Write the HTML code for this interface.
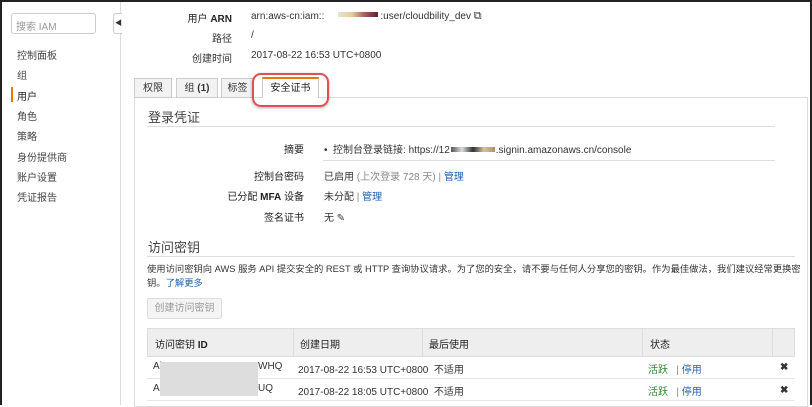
<!DOCTYPE html>
<html><head><meta charset="utf-8"><style>
*{box-sizing:border-box;margin:0;padding:0}
body{width:812px;height:405px;overflow:hidden;background:#fff;font-family:"Liberation Sans","Noto Sans CJK SC",sans-serif;font-size:10px;color:#333;position:relative}
.a{position:absolute;white-space:nowrap}
.frame{position:absolute;left:0;top:0;width:812px;height:405px;border:2px solid #222;border-bottom:none;pointer-events:none}
.nav{left:17px;font-size:10px;color:#444}
.lbl{text-align:right;width:120px}
.blue{color:#1f5fad}
.gray{color:#888}
</style></head><body>
<div class="a" style="left:120px;top:0;width:1px;height:405px;background:#ddd"></div>
<div class="a" style="left:11px;top:13px;width:85px;height:21px;border:1px solid #ccc;border-radius:3px;padding:4px 4px;color:#999;font-size:10px">搜索 IAM</div>
<div class="a" style="left:113px;top:13px;width:9px;height:21px;border:1px solid #ccc;border-right:none;background:#fff;border-radius:3px 0 0 3px;font-size:7px;line-height:19px;padding-left:1px">◀</div>
<div class="a nav" style="top:47px">控制面板</div>
<div class="a nav" style="top:67px">组</div>
<div class="a" style="left:11px;top:87px;width:2px;height:15px;background:#e47911"></div>
<div class="a nav" style="top:88px;color:#222">用户</div>
<div class="a nav" style="top:108px">角色</div>
<div class="a nav" style="top:128px">策略</div>
<div class="a nav" style="top:149px">身份提供商</div>
<div class="a nav" style="top:169px">账户设置</div>
<div class="a nav" style="top:189px">凭证报告</div>

<div class="a lbl" style="left:112px;top:10px;color:#222">用户 <b>ARN</b></div>
<div class="a lbl" style="left:112px;top:30px">路径</div>
<div class="a lbl" style="left:112px;top:50px">创建时间</div>
<div class="a" style="left:251px;top:10px">arn:aws-cn:iam::<span style="display:inline-block;width:40px;height:5px;margin:0 2px 2px 14px;background:linear-gradient(90deg,#dfe8d0,#e6cfa0,#a06060,#602030)"></span>:user/cloudbility_dev <span style="font-size:11px">⧉</span></div>
<div class="a" style="left:251px;top:30px">/</div>
<div class="a" style="left:251px;top:50px">2017-08-22 16:53 UTC+0800</div>

<div class="a" style="left:134px;top:97px;width:674px;height:310px;border:1px solid #ddd"></div>
<div class="a" style="left:134px;top:78px;width:38px;height:20px;border:1px solid #ccc;background:#f2f2f2;text-align:center;line-height:20px">权限</div>
<div class="a" style="left:176px;top:78px;width:42px;height:20px;border:1px solid #ccc;background:#f2f2f2;text-align:center;line-height:20px">组 <b>(1)</b></div>
<div class="a" style="left:221px;top:78px;width:33px;height:20px;border:1px solid #ccc;background:#f2f2f2;text-align:center;line-height:20px">标签</div>
<div class="a" style="left:262px;top:77px;width:57px;height:21px;border:1px solid #ccc;border-top:2px solid #e47911;border-bottom:none;background:#fff;text-align:center;line-height:20px;color:#222">安全证书</div>
<div class="a" style="left:252px;top:73px;width:77px;height:34px;border:2px solid #e05050;border-radius:9px;box-shadow:0 1px 3px rgba(0,0,0,.3)"></div>

<div class="a" style="left:148px;top:107px;font-size:13px;color:#444">登录凭证</div>
<div class="a" style="left:147px;top:126px;width:628px;height:1px;background:#ddd"></div>
<div class="a lbl" style="left:184px;top:141px;color:#222">摘要</div>
<div class="a" style="left:324px;top:141px">•&nbsp; 控制台登录链接: https://12<span style="display:inline-block;width:44px;height:5px;margin:0 1px 1px;background:linear-gradient(90deg,#555,#ddd,#333,#d8c0a0,#b09060)"></span>.signin.amazonaws.cn/console</div>
<div class="a" style="left:323px;top:160px;width:452px;height:1px;background:#ddd"></div>
<div class="a lbl" style="left:184px;top:168px;color:#222">控制台密码</div>
<div class="a" style="left:324px;top:168px">已启用 <span class="gray">(上次登录 728 天)</span> <span class="gray">|</span> <span class="blue">管理</span></div>
<div class="a lbl" style="left:184px;top:188px;color:#222">已分配 <b>MFA</b> 设备</div>
<div class="a" style="left:324px;top:188px">未分配 <span class="gray">|</span> <span class="blue">管理</span></div>
<div class="a lbl" style="left:184px;top:209px;color:#222">签名证书</div>
<div class="a" style="left:324px;top:209px">无 ✎</div>

<div class="a" style="left:148px;top:237px;font-size:13px;color:#444">访问密钥</div>
<div class="a" style="left:147px;top:256px;width:648px;height:1px;background:#ddd"></div>
<div class="a" style="left:147px;top:261px;font-size:9.3px">使用访问密钥向 AWS 服务 API 提交安全的 REST 或 HTTP 查询协议请求。为了您的安全，请不要与任何人分享您的密钥。作为最佳做法，我们建议经常更换密</div>
<div class="a" style="left:147px;top:275px;font-size:9.3px">钥。<span class="blue">了解更多</span></div>
<div class="a" style="left:147px;top:298px;width:75px;height:21px;border:1px solid #ddd;background:#f4f4f4;border-radius:2px;color:#999;text-align:center;line-height:19px">创建访问密钥</div>

<div class="a" style="left:147px;top:328px;width:648px;height:29px;background:#eee;border:1px solid #ddd"></div>
<div class="a" style="left:293px;top:328px;width:1px;height:29px;background:#ddd"></div>
<div class="a" style="left:422px;top:328px;width:1px;height:29px;background:#ddd"></div>
<div class="a" style="left:642px;top:328px;width:1px;height:29px;background:#ddd"></div>
<div class="a" style="left:772px;top:328px;width:1px;height:29px;background:#ddd"></div>
<div class="a" style="left:155px;top:336px;color:#222">访问密钥 <b>ID</b></div>
<div class="a" style="left:300px;top:336px;color:#222">创建日期</div>
<div class="a" style="left:429px;top:336px;color:#222">最后使用</div>
<div class="a" style="left:650px;top:336px;color:#222">状态</div>
<div class="a" style="left:147px;top:378px;width:648px;height:1px;background:#e5e5e5"></div>
<div class="a" style="left:147px;top:400px;width:648px;height:1px;background:#e5e5e5"></div>
<div class="a" style="left:153px;top:361px">Al</div>
<div class="a" style="left:258px;top:361px">WHQ</div>
<div class="a" style="left:153px;top:383px">Al</div>
<div class="a" style="left:258px;top:383px">UQ</div>
<div class="a" style="left:160px;top:362px;width:98px;height:34px;background:#ddd"></div>
<div class="a" style="left:298px;top:361px">2017-08-22 16:53 UTC+0800&nbsp; 不适用</div>
<div class="a" style="left:298px;top:383px">2017-08-22 18:05 UTC+0800&nbsp; 不适用</div>
<div class="a" style="left:648px;top:361px"><span style="color:#2a8a2a">活跃</span> &nbsp;&nbsp;<span class="gray">|</span> <span class="blue">停用</span></div>
<div class="a" style="left:648px;top:383px"><span style="color:#2a8a2a">活跃</span> &nbsp;&nbsp;<span class="gray">|</span> <span class="blue">停用</span></div>
<div class="a" style="left:780px;top:362px;font-weight:bold">✖</div>
<div class="a" style="left:780px;top:385px;font-weight:bold">✖</div>
<div class="frame"></div>
</body></html>
